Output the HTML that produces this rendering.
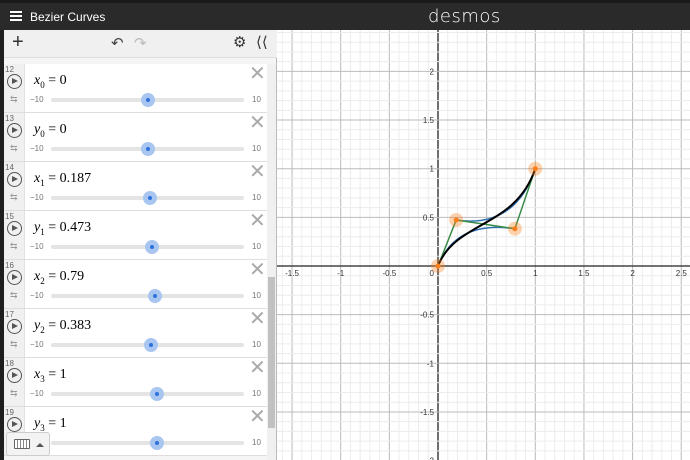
<!DOCTYPE html>
<html><head><meta charset="utf-8"><style>
*{margin:0;padding:0;box-sizing:border-box}
body{width:690px;height:460px;overflow:hidden;background:#fff;font-family:"Liberation Sans",sans-serif;position:relative}
#hdr{position:absolute;left:0;top:0;width:690px;height:30px;background:#2a2a2a;border-top:3px solid #1a1a1a}
#hdr .t{position:absolute;left:30px;top:7px;color:#fff;font-size:12px}
#hdr .logo{position:absolute;left:428px;top:3px;color:#fff;font-size:18px;letter-spacing:.5px;font-family:"DejaVu Sans",sans-serif;font-weight:300}
.ham{position:absolute;left:10px;top:8px;width:12px;height:2px;background:#fff;box-shadow:0 4px 0 #fff,0 8px 0 #fff}
#side{position:absolute;left:0;top:30px;width:277px;height:430px;background:#f5f5f5;border-right:1px solid #bbb}
#strip{position:absolute;left:0;top:30px;width:4px;height:430px;background:#1e1e1e}
#tb{position:absolute;left:4px;top:30px;width:273px;height:28px;background:#f0f0f0;border-bottom:1px solid #ddd}
.row{position:absolute;left:4px;width:263px;height:49px;background:#fff;border-bottom:1px solid #ddd}
.gut{position:absolute;left:0;top:0;width:21px;height:48px;background:#f0f0f0;border-right:1px solid #e2e2e2}
.num{position:absolute;left:1px;top:1px;font-size:8px;color:#666}
.play{position:absolute;left:3px;top:10px;width:15px;height:15px;border:1.5px solid #555;border-radius:50%}
.play:after{content:"";position:absolute;left:4px;top:2.5px;border-left:6px solid #555;border-top:3.5px solid transparent;border-bottom:3.5px solid transparent}
.rep{position:absolute;left:6px;top:30px;font-size:9px;color:#999}
.m{position:absolute;left:30px;top:9px;font-family:"Liberation Serif",serif;font-size:14px;color:#000}
.m i sub{font-size:9px;font-style:normal}
.lo{position:absolute;left:26px;top:31px;font-size:8px;color:#777}
.hi{position:absolute;left:248px;top:31px;font-size:8px;color:#777}
.trk{position:absolute;left:47px;top:34px;width:193px;height:4px;background:#e4e4e4;border-radius:2px}
.th{position:absolute;top:29px;width:14px;height:14px;margin-left:-7px;border-radius:50%;background:#a8c6f0}
.th:after{content:"";position:absolute;left:5px;top:5px;width:4px;height:4px;border-radius:50%;background:#2f72dc}
.x{position:absolute;left:245px;top:0px;font-size:20px;color:#aaa;line-height:20px}
#sb{position:absolute;left:267px;top:64px;width:9px;height:396px;background:#f0f0f0}
#sbt{position:absolute;left:268px;top:277px;width:7px;height:151px;background:#c1c1c1}
#kb{position:absolute;left:6px;top:432px;width:44px;height:24px;background:#f3f3f3;border:1px solid #ccc;border-radius:3px}
svg{position:absolute;left:0;top:0}
</style></head><body>
<svg width="690" height="460" id="g"></svg>
<div id="hdr"><div class="ham"></div><div class="t">Bezier Curves</div><div class="logo">desmos</div></div>
<div id="side"></div><div id="strip"></div>
<div id="tb">
<div style="position:absolute;left:8px;top:1px;font-size:20px;color:#333">+</div>
<div style="position:absolute;left:107px;top:4px;font-size:15px;color:#444">&#8630;</div>
<div style="position:absolute;left:130px;top:4px;font-size:15px;color:#bbb">&#8631;</div>
<div style="position:absolute;left:229px;top:3px;font-size:15px;color:#333">&#9881;</div>
<div style="position:absolute;left:252px;top:3px;font-size:15px;color:#333">&#10216;&#10216;</div>
</div>
<div id="rows"></div>
<div id="sb"></div><div id="sbt"></div>
<div id="kb"><div style="position:absolute;left:7px;top:6px;width:16px;height:10px;border:1px solid #666;border-radius:1px;background:repeating-linear-gradient(90deg,#fff 0 2px,#888 2px 3px)"></div><div style="position:absolute;left:29px;top:10px;border-bottom:4px solid #555;border-left:4px solid transparent;border-right:4px solid transparent"></div></div>
<script>
var d=[["x","0",0,148],["y","0",0,148],["x","1","0.187",150],["y","1","0.473",152],["x","2","0.79",155],["y","2","0.383",151],["x","3","1",157],["y","3","1",157]];
var h="";
d.forEach(function(r,i){var top=64+i*49;var v=r[2]===0?"0":r[2];
h+='<div class="row" style="top:'+top+'px"><div class="gut"><div class="num">'+(12+i)+'</div><div class="play"></div><div class="rep">&#8646;</div></div><div class="m"><i>'+r[0]+'<sub>'+r[1]+'</sub></i> = '+v+'</div><div class="lo">&minus;10</div><div class="trk"></div><div class="th" style="left:'+(r[3]-4)+'px"></div><div class="hi">10</div><div class="x">&#10005;</div></div>';});
document.getElementById("rows").innerHTML=h;
var ox=438,oy=266,u=97.3,s="";
for(var k=-17;k<=27;k++){var x=ox+k*u/10;if(x<277)continue;var maj=k%5==0;s+='<line x1="'+x+'" y1="30" x2="'+x+'" y2="460" stroke="'+(k==0?"#222":maj?"#bbb":"#ececec")+'" stroke-width="'+(k==0?1.3:1)+'"/>';}
for(var k=-20;k<=24;k++){var y=oy-k*u/10;if(y<30)continue;var maj=k%5==0;s+='<line x1="277" y1="'+y+'" x2="690" y2="'+y+'" stroke="'+(k==0?"#222":maj?"#bbb":"#ececec")+'" stroke-width="'+(k==0?1.3:1)+'"/>';}
var lab=[[-1.5,"-1.5"],[-1,"-1"],[-0.5,"-0.5"],[0.5,"0.5"],[1,"1"],[1.5,"1.5"],[2,"2"],[2.5,"2.5"]];
lab.forEach(function(l){s+='<text x="'+(ox+l[0]*u)+'" y="'+(oy+10)+'" font-size="8" fill="#333" text-anchor="middle" font-family="Liberation Sans">'+l[1]+'</text>';});
s+='<text x="'+(ox-4)+'" y="'+(oy+10)+'" font-size="8" fill="#333" text-anchor="end" font-family="Liberation Sans">0</text>';
[-2,-1.5,-1,-0.5,0.5,1,1.5,2].forEach(function(v){s+='<text x="'+(ox-4)+'" y="'+(oy-v*u+3)+'" font-size="8" fill="#333" text-anchor="end" font-family="Liberation Sans">'+v+'</text>';});
function P(a,b){return (ox+a*u).toFixed(1)+","+(oy-b*u).toFixed(1);}
var p=[[0,0],[.187,.473],[.79,.383],[1,1]];
s+='<path d="M'+P(0,0)+' Q'+P(.187,.473)+' '+P(.79,.383)+'" fill="none" stroke="#2d70b3" stroke-width="1.5"/>';
s+='<path d="M'+P(.187,.473)+' Q'+P(.79,.383)+' '+P(1,1)+'" fill="none" stroke="#2d70b3" stroke-width="1.5"/>';
s+='<polyline points="'+p.map(function(q){return P(q[0],q[1])}).join(" ")+'" fill="none" stroke="#388c46" stroke-width="1.5"/>';
s+='<path d="M'+P(0,0)+' C'+P(.187,.473)+' '+P(.79,.383)+' '+P(1,1)+'" fill="none" stroke="#000" stroke-width="2"/>';
p.forEach(function(q){var c=P(q[0],q[1]).split(",");s+='<circle cx="'+c[0]+'" cy="'+c[1]+'" r="7" fill="#fa7e19" opacity=".35"/><circle cx="'+c[0]+'" cy="'+c[1]+'" r="2.5" fill="#fa7e19"/>';});
document.getElementById("g").innerHTML=s;
</script>
</body></html>
